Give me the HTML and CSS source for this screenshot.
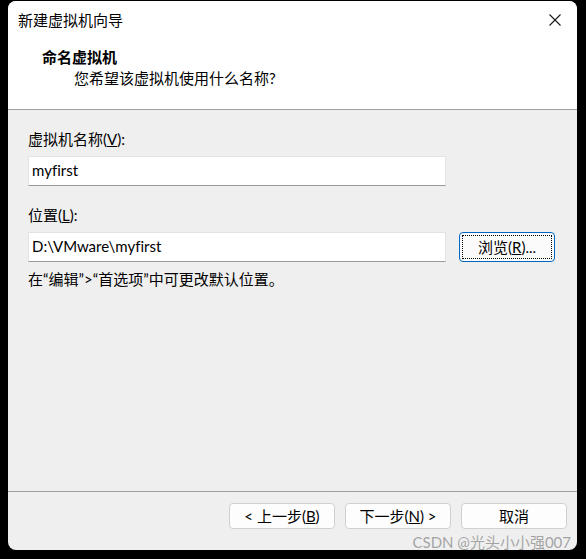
FILE: index.html
```html
<!DOCTYPE html>
<html lang="zh-CN">
<head>
  <meta charset="UTF-8" />
  <title>新建虚拟机向导</title>
  <link rel="stylesheet" href="styles.css">
</head>
<body>

  <div class="janela">
    <div class="barra-titulo">
      <span class="titulo">新建虚拟机向导</span>
      <svg class="fechar" width="12" height="12" viewBox="0 0 12 12">
        <path d="M0.5 0.5 L11.5 11.5 M11.5 0.5 L0.5 11.5" stroke="#1a1a1a" stroke-width="1.1" fill="none"/>
      </svg>
    </div>

    <div class="cabecalho">
      <div class="cab-titulo">命名虚拟机</div>
      <div class="cab-sub">您希望该虚拟机使用什么名称?</div>
    </div>

    <div class="conteudo">
      <label class="rotulo">虚拟机名称(<u>V</u>):</label>
      <div class="campo">myfirst</div>

      <label class="rotulo rotulo-local">位置(<u>L</u>):</label>
      <div class="linha-local">
        <div class="campo">D:\VMware\myfirst</div>
        <button class="btn btn-foco"><span>浏览(<u>R</u>)...</span></button>
      </div>
      <p class="dica">在“编辑”&gt;“首选项”中可更改默认位置。</p>
    </div>

    <div class="rodape">
      <button class="btn">&lt; 上一步(<u>B</u>)</button>
      <button class="btn">下一步(<u>N</u>) &gt;</button>
      <button class="btn">取消</button>
    </div>
  </div>

  <div class="marca">CSDN @光头小小强007</div>

</body>
</html>
```

FILE: styles.css
```css
body {
  margin: 0;
  width: 586px;
  height: 559px;
  background: #000;
  font-family: "Lato", "Noto Sans CJK SC", sans-serif;
  font-variant-ligatures: none;
  font-size: 15px;
  color: #000;
  position: relative;
  overflow: hidden;
}

.janela {
  margin: 1px 0 0 8px;
  width: 569px;
  height: 549px;
  background: #efefef;
  border-radius: 8px;
  overflow: hidden;
  display: flex;
  flex-direction: column;
}

.barra-titulo {
  height: 37px;
  background: #fff;
  display: flex;
  align-items: center;
  justify-content: space-between;
  padding: 0 16px 0 10px;
}

.cabecalho {
  height: 71px;
  background: #fff;
  border-bottom: 1px solid #a0a0a0;
  padding-left: 34px;
}

.cab-titulo {
  font-weight: bold;
  margin-top: 8px;
  line-height: 22px;
}

.cab-sub {
  padding-left: 32px;
  line-height: 20px;
}

.conteudo {
  flex: 1;
  padding: 18px 0 0 20px;
}

.rotulo {
  display: block;
  line-height: 22px;
  margin-bottom: 6px;
}

.rotulo-local {
  margin-top: 18px;
}

.campo {
  width: 408px;
  height: 28px;
  background: #fff;
  border: 1px solid #e3e3e3;
  border-bottom-color: #9a9a9a;
  padding: 0 5px 0 3px;
  line-height: 26px;
  font-size: 15px;
}

.linha-local {
  display: flex;
  align-items: flex-start;
  gap: 13px;
}

.dica {
  margin: 6px 0 0;
  line-height: 22px;
}

.btn {
  width: 106px;
  height: 26px;
  background: #fdfdfd;
  border: 1px solid #d0d0d0;
  border-radius: 4px;
  font-family: inherit;
  font-size: 15px;
  color: #000;
  padding: 0;
  line-height: 22px;
}

.btn-foco {
  width: 96px;
  height: 30px;
  border: 1px solid #0067c0;
  background: #fbfbfb;
  padding: 2px;
}

.btn-foco span {
  display: block;
  height: 100%;
  box-sizing: border-box;
  border: 1px dotted #000;
  line-height: 22px;
}

.rodape {
  height: 47px;
  border-top: 1px solid #a0a0a0;
  display: flex;
  justify-content: flex-end;
  align-items: flex-start;
  gap: 10px;
  padding: 11px 10px 0 0;
}

.marca {
  position: absolute;
  right: 15px;
  bottom: 7px;
  color: rgba(150, 150, 150, 0.85);
  font-size: 15px;
}
```
